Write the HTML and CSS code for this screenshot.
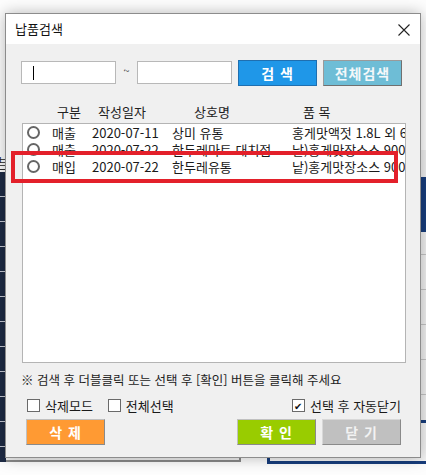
FILE: index.html
```html
<!DOCTYPE html>
<html lang="ko">
  <head>
    <meta charset="UTF-8" />
    <meta name="viewport" content="width=device-width, initial-scale=1.0" />
    <title>납품검색</title>
    <link rel="stylesheet" href="styles.css">
  </head>
  <body>
    <!-- windows behind the dialog -->
    <div class="bg-left"><span class="bg-char">브</span></div>
    <div class="bg-right"><div class="bg-right-band"></div></div>
    <div class="bg-box-grey"></div>
    <div class="bg-box-navy"></div>

    <div class="dialog">
      <div class="titlebar">
        <span class="title">납품검색</span>
        <svg class="close" width="12" height="12" viewBox="0 0 12 12">
          <path d="M0.5 0.5 L11.5 11.5 M11.5 0.5 L0.5 11.5" stroke="#222" stroke-width="1.1" fill="none" />
        </svg>
      </div>

      <div class="content">
        <div class="search-row">
          <div class="field"><span class="caret"></span></div>
          <span class="tilde">~</span>
          <div class="field"></div>
          <button class="btn btn-search">검 색</button>
          <button class="btn btn-all">전체검색</button>
        </div>

        <div class="list-head">
          <span class="h-type">구분</span>
          <span class="h-date">작성일자</span>
          <span class="h-name">상호명</span>
          <span class="h-item">품 목</span>
        </div>

        <div class="list">
          <div class="row">
            <span class="radio"></span>
            <span class="c-type">매출</span>
            <span class="c-date">2020-07-11</span>
            <span class="c-name">상미 유통</span>
            <span class="c-item">홍게맛액젓 1.8L 외 6건</span>
          </div>
          <div class="row">
            <span class="radio"></span>
            <span class="c-type">매출</span>
            <span class="c-date">2020-07-22</span>
            <span class="c-name">한두레마트 대치점</span>
            <span class="c-item">낱)홍게맛장소스 900ml</span>
          </div>
          <div class="row">
            <span class="radio"></span>
            <span class="c-type">매입</span>
            <span class="c-date">2020-07-22</span>
            <span class="c-name">한두레유통</span>
            <span class="c-item">낱)홍게맛장소스 900ml</span>
          </div>
        </div>

        <p class="note">※ 검색 후 더블클릭 또는 선택 후 [확인] 버튼을 클릭해 주세요</p>

        <div class="options">
          <label class="check"><span class="box"></span>삭제모드</label>
          <label class="check"><span class="box"></span>전체선택</label>
          <label class="check check-right"><span class="box checked">&#x2714;</span>선택 후 자동닫기</label>
        </div>

        <div class="actions">
          <button class="btn btn-delete">삭 제</button>
          <button class="btn btn-ok">확 인</button>
          <button class="btn btn-close">닫 기</button>
        </div>
      </div>
    </div>

    <div class="highlight"></div>
  </body>
</html>
```

FILE: styles.css
```css
body {
  margin: 0;
  width: 426px;
  height: 475px;
  position: relative;
  overflow: hidden;
  background: #fdfdfd;
  font-family: "Noto Sans CJK KR", "Noto Sans", sans-serif;
  color: #1a1a1a;
}

/* background windows */
.bg-left {
  position: absolute;
  left: 0;
  top: 172px;
  width: 6px;
  height: 290px;
  background: repeating-linear-gradient(#1e2b45 0, #1e2b45 24px, #c8ccd6 24px, #c8ccd6 25px);
}

.bg-char {
  position: absolute;
  top: -17px;
  left: -2px;
  font-size: 12px;
  line-height: 14px;
  color: #222;
  border-bottom: 1px solid #333;
}

.bg-right {
  position: absolute;
  left: 420px;
  top: 150px;
  width: 6px;
  height: 270px;
  background: repeating-linear-gradient(#f0f0f0 0, #f0f0f0 34px, #c4c4c4 34px, #c4c4c4 35px);
}

.bg-right-band {
  margin-top: 27px;
  height: 55px;
  background: #173d7c;
}

.bg-box-grey {
  position: absolute;
  left: 6px;
  top: 430px;
  width: 233px;
  height: 30px;
  background: #f0f0f0;
  border: 2px solid #8a8a8a;
  border-left: 0;
  border-top: 0;
}

.bg-box-navy {
  position: absolute;
  left: 267px;
  top: 420px;
  width: 170px;
  height: 38px;
  background: #f4f4f4;
  border: 3px solid #173d7c;
  border-right: 0;
}

/* dialog */
.dialog {
  position: absolute;
  left: 5px;
  top: 13px;
  width: 414px;
  height: 443px;
  border: 1px solid #8c8c8c;
  background: #f0f0f0;
  box-shadow: 0 0 14px rgba(0, 0, 0, 0.28);
  display: flex;
  flex-direction: column;
}

.titlebar {
  height: 30px;
  background: #fff;
  display: flex;
  align-items: center;
  justify-content: space-between;
  padding: 0 10px 0 9px;
}

.title {
  font-size: 13px;
  line-height: 16px;
  color: #111;
}

.close {
  display: block;
  margin-top: 2px;
}

.content {
  padding: 16px 0 0 15px;
}

.search-row {
  display: flex;
  align-items: center;
  height: 25px;
}

.field {
  width: 93px;
  height: 21px;
  background: #fff;
  border: 1px solid #b8b8b8;
  position: relative;
}

.caret {
  position: absolute;
  left: 11px;
  top: 4px;
  width: 1px;
  height: 14px;
  background: #000;
}

.tilde {
  width: 21px;
  text-align: center;
  font-size: 11px;
  color: #444;
  margin-top: -6px;
}

.btn {
  font-family: "Noto Sans CJK KR", sans-serif;
  font-weight: bold;
  font-size: 14px;
  line-height: 18px;
  color: #fff;
  width: 79px;
  height: 26px;
  padding: 0;
  border: 1px solid #9a9a9a;
  border-bottom-color: #707070;
  border-right-color: #707070;
  letter-spacing: 1px;
}

.btn-search {
  margin-left: 6px;
  background: #1f97e8;
  border-color: #1f6fb0;
}

.btn-all {
  margin-left: 6px;
  background: #6ebdd6;
  color: #f4f8fa;
}

.list-head {
  display: flex;
  height: 20px;
  margin-top: 17px;
  font-size: 13px;
  line-height: 20px;
  color: #222;
}

.h-type { margin-left: 36px; width: 41px; }
.h-date { width: 96px; }
.h-name { width: 109px; }

.list {
  width: 382px;
  height: 238px;
  margin-left: 1px;
  margin-top: 1px;
  background: #fff;
  border: 1px solid #b4b4b4;
  overflow: hidden;
}

.row {
  display: flex;
  align-items: center;
  height: 17px;
  font-size: 13px;
  line-height: 17px;
  white-space: nowrap;
}

.radio {
  width: 9px;
  height: 9px;
  border: 2px solid #666;
  border-radius: 50%;
  margin-left: 4px;
  margin-right: 12px;
  flex: none;
}

.c-type { width: 40px; flex: none; }
.c-date { width: 80px; flex: none; }
.c-name { width: 120px; flex: none; }
.c-item { flex: none; }

.note {
  margin: 9px 0 0 0;
  font-size: 12.5px;
  line-height: 16px;
  color: #222;
}

.options {
  display: flex;
  align-items: center;
  margin-top: 9px;
  height: 16px;
  padding-left: 6px;
  font-size: 13px;
}

.check {
  display: flex;
  align-items: center;
  margin-right: 15px;
}

.check-right {
  margin-left: auto;
  margin-right: 19px;
}

.box {
  width: 11px;
  height: 11px;
  border: 1px solid #6a6a6a;
  background: #fff;
  margin-right: 5px;
  font-size: 10px;
  line-height: 11px;
  text-align: center;
  color: #111;
}

.actions {
  display: flex;
  margin-top: 6px;
  padding-left: 5px;
}

.btn-delete {
  background: #ff9a33;
  border-color: #c0c0c0 #8a8a8a #8a8a8a #c0c0c0;
}

.btn-ok {
  margin-left: auto;
  background: #99cc00;
  border-color: #c0c0c0 #8a8a8a #8a8a8a #c0c0c0;
}

.btn-close {
  margin-left: 6px;
  margin-right: 19px;
  background: #c0c0c0;
  color: #f2f2f2;
  border-color: #d8d8d8 #8a8a8a #8a8a8a #d8d8d8;
}

/* annotation box drawn over the screenshot */
.highlight {
  position: absolute;
  left: 11px;
  top: 151px;
  width: 379px;
  height: 24px;
  border: 4px solid #e3202a;
}
```
